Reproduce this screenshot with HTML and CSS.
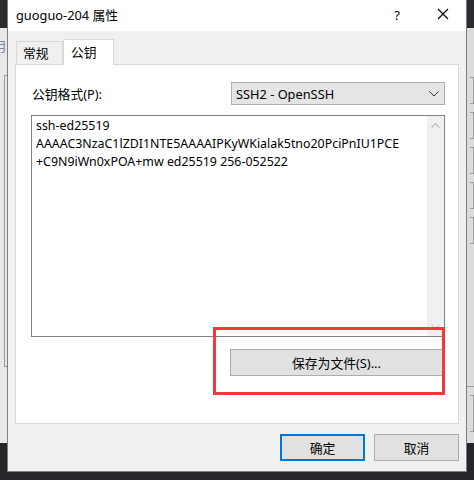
FILE: index.html
```html
<!DOCTYPE html>
<html lang="zh-CN">
<head>
  <meta charset="UTF-8">
  <title>guoguo-204 属性</title>
  <link rel="stylesheet" href="styles.css">
</head>
<body>
  <!-- ventana de fondo (aplicación detrás del diálogo) -->
  <div class="desktop">
    <div class="desk-top"></div>
    <div class="app">
      <div class="app-left">
        <span class="app-char">月</span>
        <div class="app-frame"></div>
      </div>
      <div class="app-right">
        <div class="app-btn"></div>
        <div class="app-btn"></div>
        <div class="app-btn"></div>
        <div class="app-btn"></div>
        <div class="app-btn"></div>
        <div class="app-rule"></div>
        <div class="app-btn tall"></div>
      </div>
    </div>
  </div>

  <!-- diálogo de propiedades -->
  <div class="dialog">
    <div class="titlebar">
      <span class="title">guoguo-204 属性</span>
      <div class="title-btns">
        <span class="tbtn">?</span>
        <span class="tbtn close">
          <svg width="12" height="12" viewBox="0 0 12 12"><path d="M1 1L11 11M11 1L1 11" stroke="#000" stroke-width="1.1" fill="none"/></svg>
        </span>
      </div>
    </div>

    <div class="body">
      <div class="tabs">
        <span class="tab">常规</span>
        <span class="tab active">公钥</span>
      </div>
      <div class="panel">
        <div class="row">
          <label class="lbl">公钥格式(P):</label>
          <div class="select">
            <span>SSH2 - OpenSSH</span>
            <svg width="10" height="6" viewBox="0 0 10 6"><path d="M0.5 0.5L5 5L9.5 0.5" stroke="#333" stroke-width="1" fill="none"/></svg>
          </div>
        </div>
        <div class="keybox">
          <div class="keytext">ssh-ed25519<br>AAAAC3NzaC1lZDI1NTE5AAAAIPKyWKialak5tno20PciPnIU1PCE<br>+C9N9iWn0xPOA+mw ed25519 256-052522</div>
          <div class="vscroll">
            <svg width="9" height="5" viewBox="0 0 9 5"><path d="M0.5 4.5L4.5 0.5L8.5 4.5" stroke="#bcbcbc" stroke-width="1.2" fill="none"/></svg>
            <svg width="9" height="5" viewBox="0 0 9 5"><path d="M0.5 0.5L4.5 4.5L8.5 0.5" stroke="#d4d4d4" stroke-width="1.2" fill="none"/></svg>
          </div>
        </div>
        <div class="save-row">
          <button class="btn save">保存为文件(S)...</button>
        </div>
        <div class="mark"></div>
      </div>
      <div class="footer">
        <button class="btn ok">确定</button>
        <button class="btn">取消</button>
      </div>
    </div>
  </div>
</body>
</html>
```

FILE: styles.css
```css
/* Reset y estilos básicos */
* {
  box-sizing: border-box;
  margin: 0;
  padding: 0;
}
body {
  width: 474px;
  height: 480px;
  overflow: hidden;
  position: relative;
  background: #25252a;
  font-family: "Noto Sans", "Noto Sans CJK SC", sans-serif;
  font-size: 12px;
  color: #000;
}

/* fondo */
.desktop {
  display: flex;
  flex-direction: column;
  height: 100%;
}
.desk-top {
  height: 28px;
  background: #2b2b30;
}
.app {
  height: 415px;
  background: #e8e8e8;
  display: flex;
  justify-content: space-between;
}
.app-left {
  width: 8px;
  position: relative;
  overflow: hidden;
}
.app-char {
  position: absolute;
  left: -6px;
  top: 8px;
  font-size: 13px;
  color: #7a8aa0;
}
.app-frame {
  position: absolute;
  left: 4px;
  top: 47px;
  width: 10px;
  height: 292px;
  border: 1px solid #9a9a9a;
}
.app-right {
  width: 8px;
  padding-top: 49px;
  display: flex;
  flex-direction: column;
  gap: 8px;
  align-items: flex-end;
  background: #dcdcdc;
}
.app-btn {
  width: 4px;
  height: 27px;
  border: 1px solid #9a9a9a;
  border-left: none;
}
.app-btn.tall {
  height: 37px;
}
.app-rule {
  width: 8px;
  height: 1px;
  margin-top: 134px;
  background: #9a9a9a;
}

/* diálogo */
.dialog {
  position: absolute;
  left: 7px;
  top: 0;
  width: 460px;
  height: 472px;
  border: 1px solid #7d7d7d;
  border-top: none;
  background: #f0f0f0;
  display: flex;
  flex-direction: column;
}
.titlebar {
  height: 31px;
  background: #fff;
  display: flex;
  align-items: center;
  justify-content: space-between;
  padding-left: 8px;
}
.title {
  font-size: 12.8px;
  padding-bottom: 2px;
}
.title-btns {
  display: flex;
  height: 100%;
}
.tbtn {
  width: 46px;
  display: flex;
  align-items: center;
  justify-content: center;
  font-size: 13px;
  padding-bottom: 2px;
}
.tbtn.close {
  padding-bottom: 3px;
}

.body {
  flex: 1;
  padding: 8px 7px 10px 7px;
  display: flex;
  flex-direction: column;
}
.tabs {
  display: flex;
  height: 25px;
  padding-left: 1px;
  align-items: flex-end;
  position: relative;
  z-index: 1;
}
.tab {
  height: 23px;
  width: 47px;
  border: 1px solid #d9d9d9;
  border-bottom: none;
  background: #f0f0f0;
  padding-left: 6px;
  line-height: 22px;
  font-size: 12.8px;
}
.tab.active {
  width: 51px;
  height: 26px;
  margin-bottom: -1px;
  background: #fff;
  padding-left: 7px;
  line-height: 24px;
}
.panel {
  position: relative;
  height: 360px;
  background: #fff;
  border: 1px solid #d9d9d9;
  padding: 17px 13px 0 15px;
  display: flex;
  flex-direction: column;
}
.row {
  display: flex;
  justify-content: space-between;
  align-items: center;
  height: 23px;
}
.lbl {
  font-size: 12.8px;
  padding-left: 1px;
}
.select {
  width: 214px;
  height: 23px;
  background: #e5e5e5;
  border: 1px solid #adadad;
  display: flex;
  align-items: center;
  justify-content: space-between;
  padding: 0 5px 0 4px;
  font-size: 12.8px;
}
.keybox {
  margin-top: 10px;
  height: 222px;
  border: 1px solid #828282;
  display: flex;
}
.keytext {
  flex: 1;
  padding: 1px 4px;
  line-height: 18px;
  font-size: 12.4px;
}
.vscroll {
  width: 17px;
  background: #f0f0f0;
  display: flex;
  flex-direction: column;
  justify-content: space-between;
  align-items: center;
  padding: 7px 0 7px;
}
.save-row {
  display: flex;
  justify-content: flex-end;
  margin-top: 12px;
  padding-right: 2px;
}
.btn {
  font-family: inherit;
  font-size: 12.8px;
  color: #000;
  background: #e1e1e1;
  border: 1px solid #adadad;
  height: 27px;
}
.btn.save {
  width: 213px;
}
.mark {
  position: absolute;
  left: 197px;
  top: 262px;
  width: 232px;
  height: 68px;
  border: 3px solid #ef3a3a;
}
.footer {
  margin-top: 10px;
  display: flex;
  justify-content: flex-end;
  gap: 9px;
  padding-right: 0;
}
.footer .btn {
  width: 85px;
}
.btn.ok {
  border: 2px solid #0078d7;
}
```
